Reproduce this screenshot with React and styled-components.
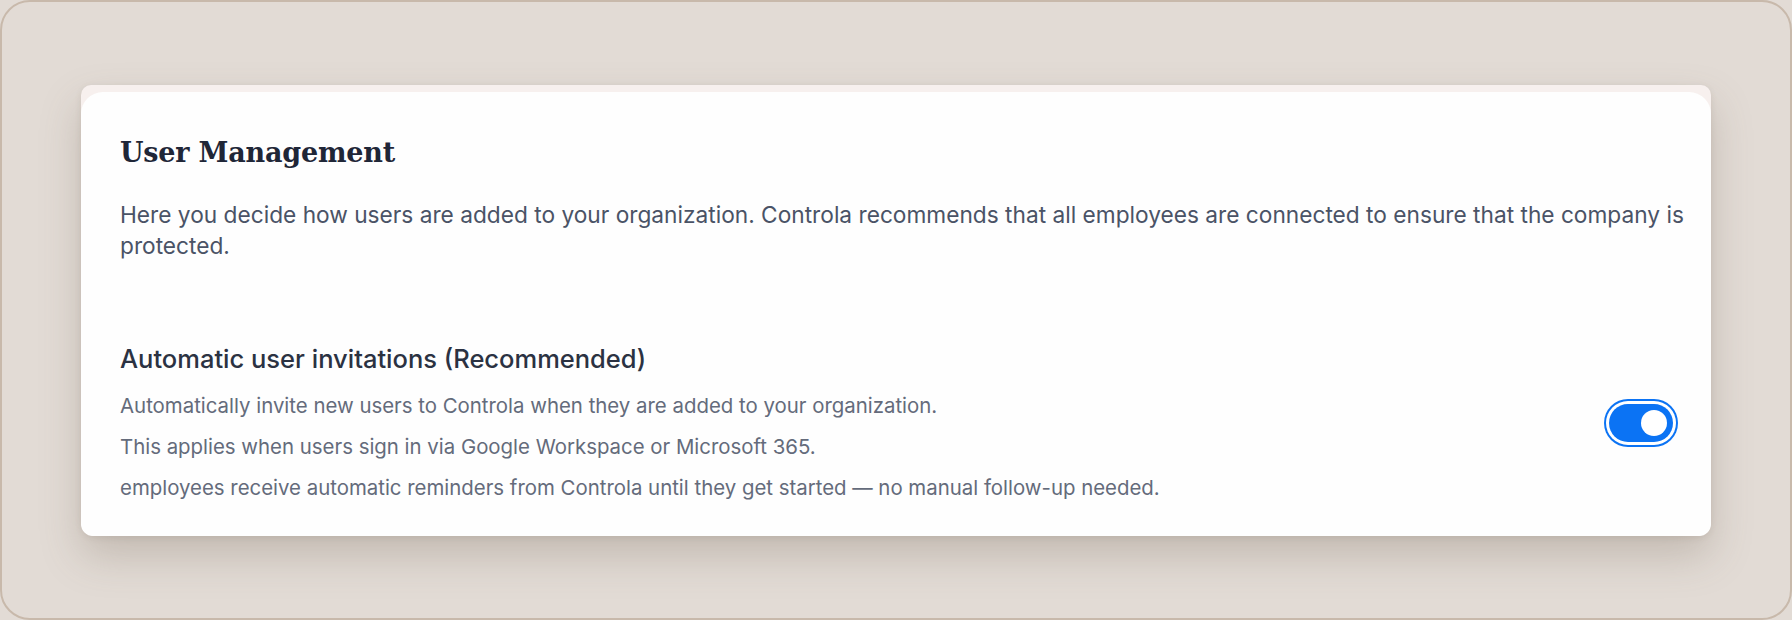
import React, { useState } from "react";
import styled, { createGlobalStyle } from "styled-components";

const GlobalStyle = createGlobalStyle`
  html, body {
    margin: 0;
    padding: 0;
    background: #e2dbd5;
  }

  * {
    box-sizing: border-box;
  }
`;

const Frame = styled.div`
  width: 1792px;
  height: 620px;
  padding: 83px 79px 0 79px;

  background: #e2dbd5;
  border: 2px solid #c8b9ab;
  border-radius: 30px;
`;

const Shell = styled.section`
  padding-top: 7px;

  background: #f7f0ee;
  border-radius: 10px 10px 14px 14px;
  box-shadow: 0 20px 40px rgba(110, 92, 78, 0.26), 0 2px 6px rgba(110, 92, 78, 0.12);
`;

const Card = styled.div`
  padding: 43px 12px 28px 39px;

  background: #fefefe;
  border-radius: 22px 22px 12px 12px;
`;

const Title = styled.h1`
  margin: 0;

  color: #1f2637;
  font-family: "DejaVu Serif", "Liberation Serif", serif;
  font-size: 27px;
  font-weight: 700;
  line-height: 36px;
  letter-spacing: -0.2px;
`;

const Intro = styled.p`
  margin: 28px 0 0;

  color: #4a5366;
  font-family: Inter, "Noto Sans", sans-serif;
  font-size: 22.7px;
  line-height: 31px;
`;

const SettingRow = styled.div`
  display: flex;
  align-items: center;
  justify-content: space-between;
  gap: 40px;

  margin-top: 82px;
`;

const SettingText = styled.div`
  display: flex;
  flex-direction: column;
`;

const SettingTitle = styled.h2`
  margin: 0 0 10px;

  color: #2b3242;
  font-family: Inter, "Noto Sans", sans-serif;
  font-size: 25.5px;
  font-weight: 500;
  line-height: 32px;
`;

const SettingLine = styled.p`
  margin: 0;

  color: #646b7b;
  font-family: Inter, "Noto Sans", sans-serif;
  font-size: 20.4px;
  line-height: 41px;
`;

const Switch = styled.button`
  position: relative;
  flex-shrink: 0;

  width: 64px;
  height: 38px;
  margin: 0 26px 5px 0;
  padding: 0;

  background: ${props => (props.on ? "#0b73f4" : "#cfd3db")};
  border: none;
  border-radius: 19px;
  box-shadow: 0 0 0 3px #ffffff, 0 0 0 5px #0b73f4;
  cursor: pointer;
`;

const Knob = styled.span`
  position: absolute;
  top: 6px;
  left: ${props => (props.on ? "32px" : "6px")};

  width: 26px;
  height: 26px;

  background: #ffffff;
  border-radius: 50%;
  transition: left 0.15s ease;
`;

export default function App() {
  const [autoInvite, setAutoInvite] = useState(true);

  return (
    <>
      <GlobalStyle />
      <Frame>
        <Shell>
          <Card>
            <Title>User Management</Title>
            <Intro>
              Here you decide how users are added to your organization. Controla
              recommends that all employees are connected to ensure that the
              company is protected.
            </Intro>

            <SettingRow>
              <SettingText>
                <SettingTitle>Automatic user invitations (Recommended)</SettingTitle>
                <SettingLine>
                  Automatically invite new users to Controla when they are added to
                  your organization.
                </SettingLine>
                <SettingLine>
                  This applies when users sign in via Google Workspace or Microsoft
                  365.
                </SettingLine>
                <SettingLine>
                  employees receive automatic reminders from Controla until they get
                  started — no manual follow-up needed.
                </SettingLine>
              </SettingText>

              <Switch
                role="switch"
                aria-checked={autoInvite}
                on={autoInvite ? 1 : 0}
                onClick={() => setAutoInvite(!autoInvite)}
              >
                <Knob on={autoInvite ? 1 : 0} />
              </Switch>
            </SettingRow>
          </Card>
        </Shell>
      </Frame>
    </>
  );
}
